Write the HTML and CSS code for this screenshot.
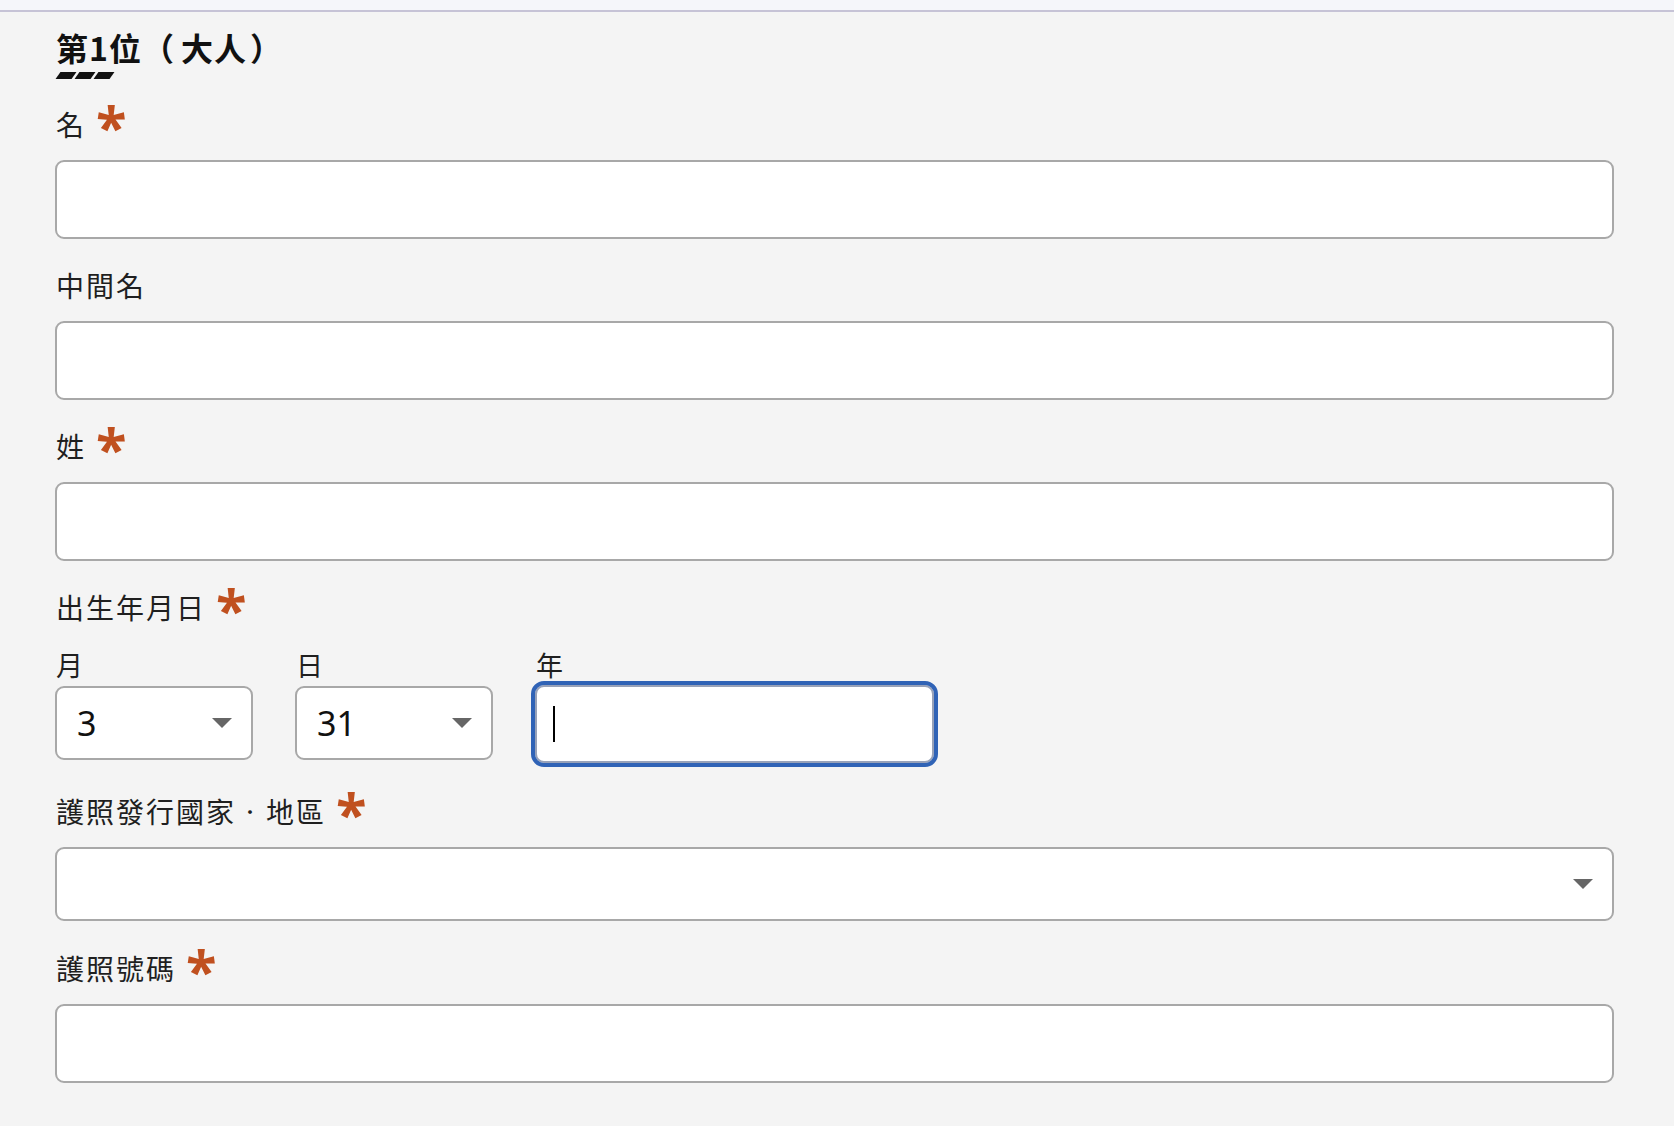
FILE: index.html
```html
<!DOCTYPE html>
<html lang="zh-Hant">
<head>
<meta charset="utf-8">
<title>旅客資料</title>
<link rel="stylesheet" href="styles.css">
</head>
<body>
<div class="topbar"></div>
<main class="form">
  <h2 class="title">第1位<span class="paren-open">（</span>大人<span class="paren-close">）</span></h2>
  <div class="dashes"><span></span><span></span><span></span></div>

  <div class="field field-first">
    <label class="label">名<span class="req">*</span></label>
    <input class="text-input" type="text">
  </div>

  <div class="field">
    <label class="label">中間名</label>
    <input class="text-input" type="text">
  </div>

  <div class="field">
    <label class="label">姓<span class="req">*</span></label>
    <input class="text-input" type="text">
  </div>

  <div class="field">
    <div class="label">出生年月日<span class="req">*</span></div>
    <div class="dob">
      <div class="dob-col dob-month">
        <div class="sublabel">月</div>
        <div class="select"><span class="select-value">3</span><span class="arrow"></span></div>
      </div>
      <div class="dob-col dob-day">
        <div class="sublabel">日</div>
        <div class="select"><span class="select-value">31</span><span class="arrow"></span></div>
      </div>
      <div class="dob-col dob-year">
        <div class="sublabel">年</div>
        <div class="year-box"><span class="caret"></span></div>
      </div>
    </div>
  </div>

  <div class="field field-after-select">
    <div class="label">護照發行國家<span class="mid">・</span>地區<span class="req">*</span></div>
    <div class="select select-wide"><span class="select-value"></span><span class="arrow"></span></div>
  </div>

  <div class="field field-after-select2">
    <label class="label">護照號碼<span class="req">*</span></label>
    <input class="text-input" type="text">
  </div>
</main>
</body>
</html>
```

FILE: styles.css
```css
* { box-sizing: border-box; }

html, body {
  margin: 0;
  padding: 0;
  background: #f4f4f4;
  font-family: "Noto Sans CJK TC", "Noto Sans", sans-serif;
  color: #1c1c1c;
}

.topbar {
  height: 12px;
  background: #f5f6fa;
  border-bottom: 2px solid #c6c3d6;
}

.form {
  width: 1559px;
  margin-left: 55px;
  padding-top: 19px;
}

.title {
  margin: 0;
  font-size: 32px;
  line-height: 32px;
  font-weight: 700;
  color: #111;
  padding-left: 1px;
  letter-spacing: 1px;
}
.paren-open {
  margin-right: 6px;
}
.paren-close {
  margin-left: 3px;
}

.dashes {
  display: flex;
  gap: 3px;
  margin-top: 9px;
  padding-left: 3px;
}
.dashes span {
  display: block;
  width: 16px;
  height: 7px;
  background: #111;
  transform: skewX(-35deg);
}

.field {
  margin-top: 26px;
}
.field-first {
  margin-top: 25px;
}
.field-after-select {
  margin-top: 28px;
}
.field-after-select2 {
  margin-top: 27px;
}

.label {
  display: block;
  font-size: 28px;
  line-height: 40px;
  height: 40px;
  letter-spacing: 2px;
  padding-left: 1px;
  margin-bottom: 16px;
  color: #1f1f1f;
  white-space: nowrap;
}

.mid {
  display: inline-block;
  font-size: 18px;
  padding: 0 5px;
  vertical-align: 4px;
  line-height: 1;
}

.req {
  display: inline-block;
  vertical-align: top;
  color: #c0501f;
  font-family: "Open Sans", "Noto Sans", sans-serif;
  font-weight: 700;
  font-size: 56px;
  line-height: 40px;
  height: 40px;
  letter-spacing: 0;
  margin-left: 10px;
  margin-top: 1px;
}

.text-input {
  display: block;
  width: 100%;
  height: 79px;
  border: 2px solid #a8a8a8;
  border-radius: 9px;
  background: #fff;
  font-size: 32px;
  padding: 0 18px;
  outline: none;
}

.dob {
  display: flex;
  gap: 42px;
  align-items: flex-start;
}
.dob-month, .dob-day { width: 198px; }
.dob-year { width: 399px; }

.sublabel {
  font-size: 27px;
  line-height: 28px;
  height: 28px;
  margin-top: 8px;
  margin-bottom: 7px;
  padding-left: 1px;
  color: #1f1f1f;
}

.select {
  display: flex;
  align-items: center;
  justify-content: space-between;
  height: 74px;
  border: 2px solid #a8a8a8;
  border-radius: 9px;
  background: #fff;
  padding: 0 19px 0 20px;
}
.select-value {
  font-family: "Noto Sans", sans-serif;
  font-size: 34px;
  color: #111;
}
.arrow {
  width: 0;
  height: 0;
  border-left: 10px solid transparent;
  border-right: 10px solid transparent;
  border-top: 10px solid #666;
}

.year-box {
  display: flex;
  align-items: center;
  height: 78px;
  margin-top: -1px;
  border: 2px solid #98a2b9;
  border-radius: 9px;
  background: #fff;
  outline: 4px solid #3063b6;
  outline-offset: 0;
  padding-left: 16px;
}
.caret {
  display: block;
  width: 2px;
  height: 36px;
  background: #000;
}

.select-wide {
  width: 100%;
}
```
